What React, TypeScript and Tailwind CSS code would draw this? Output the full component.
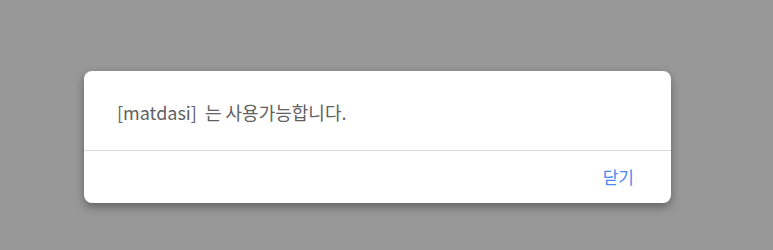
export default function App() {
  return (
    <div className="h-[250px] w-full bg-[#989898] pl-[84px] pt-[71px] font-['Noto_Sans_CJK_KR',sans-serif]">
      <div className="w-[587px] overflow-hidden rounded-lg bg-white shadow-[0_4px_10px_rgba(0,0,0,0.35)]">
        <div className="h-[79px] pl-[33px] pr-6 pt-[28px] text-[18px] leading-[27px] text-[#616161]">
          [matdasi]&nbsp; 는 사용가능합니다.
        </div>
        <div className="flex h-[53px] items-center justify-end border-t border-[#d9d9d9] pr-[37px]">
          <button className="text-[17px] leading-6 text-[#4a89f3]">닫기</button>
        </div>
      </div>
    </div>
  );
}
